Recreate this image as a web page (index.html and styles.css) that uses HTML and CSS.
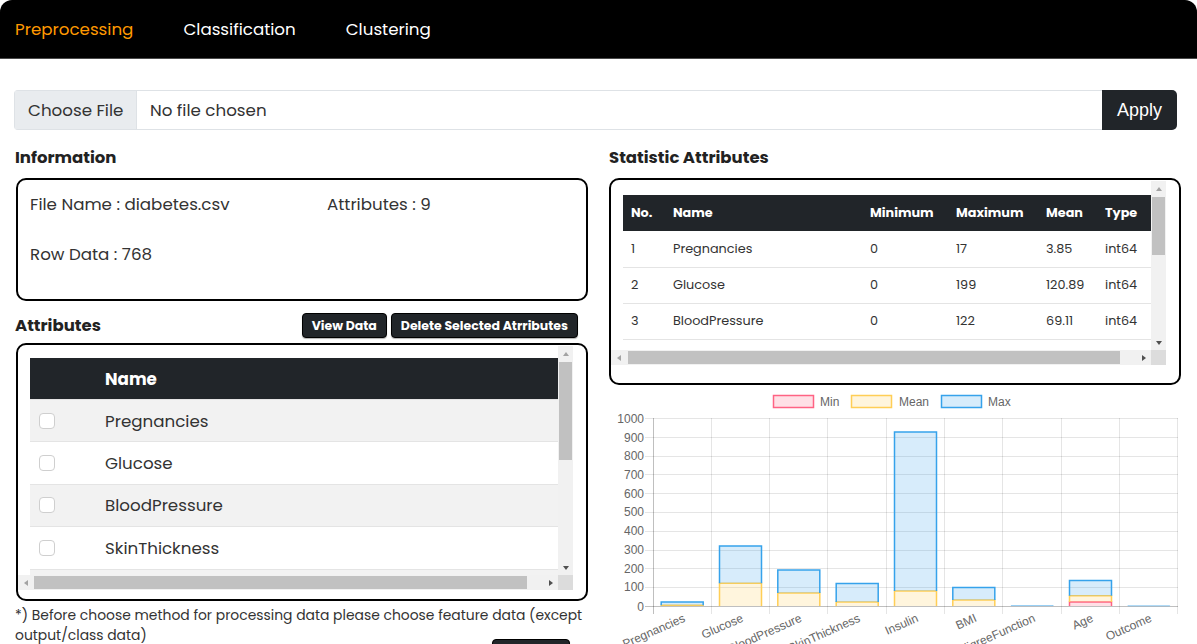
FILE: index.html
```html
<!DOCTYPE html>
<html lang="en">
<head>
<meta charset="utf-8">
<title>Preprocessing</title>
<link rel="stylesheet" href="styles.css">
</head>
<body>
<nav class="topnav">
  <a class="nav-link active">Preprocessing</a>
  <a class="nav-link">Classification</a>
  <a class="nav-link">Clustering</a>
</nav>
<main class="page">
  <div class="upload">
    <div class="choose">Choose File</div>
    <div class="chosen">No file chosen</div>
    <button class="apply">Apply</button>
  </div>
  <div class="cols">
    <section class="col">
      <h2 class="heading">Information</h2>
      <div class="box info-box">
        <div class="info-grid">
          <div>File Name : diabetes.csv</div>
          <div>Attributes : 9</div>
          <div>Row Data : 768</div>
        </div>
      </div>
      <div class="attr-head">
        <h2 class="heading">Attributes</h2>
        <div class="btns">
          <button class="btn-dark">View Data</button>
          <button class="btn-dark">Delete Selected Atrributes</button>
        </div>
      </div>
      <div class="box attr-box">
        <div class="frame attr-frame">
          <div class="viewport attr-view">
            <table class="attr-table">
              <thead><tr><th class="cb-col"></th><th>Name</th></tr></thead>
              <tbody>
                <tr><td class="cb-col"><span class="cb"></span></td><td>Pregnancies</td></tr>
                <tr><td class="cb-col"><span class="cb"></span></td><td>Glucose</td></tr>
                <tr><td class="cb-col"><span class="cb"></span></td><td>BloodPressure</td></tr>
                <tr><td class="cb-col"><span class="cb"></span></td><td>SkinThickness</td></tr>
                <tr><td class="cb-col"><span class="cb"></span></td><td>Insulin</td></tr>
                <tr><td class="cb-col"><span class="cb"></span></td><td>BMI</td></tr>
                <tr><td class="cb-col"><span class="cb"></span></td><td>DiabetesPedigreeFunction</td></tr>
                <tr><td class="cb-col"><span class="cb"></span></td><td>Age</td></tr>
              </tbody>
            </table>
          </div>
          <div class="vbar">
            <span class="sbtn"><i class="arr up"></i></span>
            <span class="vtrack"><span class="vthumb attr-vthumb"></span></span>
            <span class="sbtn"><i class="arr down"></i></span>
          </div>
          <div class="hbar">
            <span class="sbtn"><i class="arr left"></i></span>
            <span class="htrack"><span class="hthumb attr-hthumb"></span></span>
            <span class="sbtn"><i class="arr right"></i></span>
          </div>
          <div class="corner"></div>
        </div>
      </div>
      <p class="note">*) Before choose method for processing data please choose feature data (except output/class data)</p>
      <div class="process-row"><button class="btn-dark process">Process</button></div>
    </section>
    <section class="col">
      <h2 class="heading">Statistic Attributes</h2>
      <div class="box stat-box">
        <div class="frame stat-frame">
          <div class="viewport stat-view">
            <table class="stat-table">
              <thead>
                <tr><th class="c-no">No.</th><th class="c-name">Name</th><th class="c-min">Minimum</th><th class="c-max">Maximum</th><th class="c-mean">Mean</th><th class="c-type">Type</th></tr>
              </thead>
              <tbody>
                <tr><td>1</td><td>Pregnancies</td><td>0</td><td>17</td><td>3.85</td><td>int64</td></tr>
                <tr><td>2</td><td>Glucose</td><td>0</td><td>199</td><td>120.89</td><td>int64</td></tr>
                <tr><td>3</td><td>BloodPressure</td><td>0</td><td>122</td><td>69.11</td><td>int64</td></tr>
                <tr><td>4</td><td>SkinThickness</td><td>0</td><td>99</td><td>20.54</td><td>int64</td></tr>
                <tr><td>5</td><td>Insulin</td><td>0</td><td>846</td><td>79.8</td><td>int64</td></tr>
                <tr><td>6</td><td>BMI</td><td>0.0</td><td>67.1</td><td>31.99</td><td>float64</td></tr>
                <tr><td>7</td><td>DiabetesPedigreeFunction</td><td>0.078</td><td>2.42</td><td>0.47</td><td>float64</td></tr>
                <tr><td>8</td><td>Age</td><td>21</td><td>81</td><td>33.24</td><td>int64</td></tr>
                <tr><td>9</td><td>Outcome</td><td>0</td><td>1</td><td>0.35</td><td>int64</td></tr>
              </tbody>
            </table>
          </div>
          <div class="vbar">
            <span class="sbtn"><i class="arr up"></i></span>
            <span class="vtrack"><span class="vthumb stat-vthumb"></span></span>
            <span class="sbtn"><i class="arr down"></i></span>
          </div>
          <div class="hbar">
            <span class="sbtn"><i class="arr left"></i></span>
            <span class="htrack"><span class="hthumb stat-hthumb"></span></span>
            <span class="sbtn"><i class="arr right"></i></span>
          </div>
          <div class="corner"></div>
        </div>
      </div>
      <svg class="chart" width="572" height="290" viewBox="0 0 572 290" xmlns="http://www.w3.org/2000/svg">
        <g class="legend">
          <rect x="164.5" y="10.5" width="40" height="12" fill="rgba(255,99,132,0.2)" stroke="rgb(255,99,132)" stroke-width="1.5"/>
          <text x="211" y="20.5">Min</text>
          <rect x="242.5" y="10.5" width="40" height="12" fill="rgba(255,206,86,0.2)" stroke="rgb(255,206,86)" stroke-width="1.5"/>
          <text x="290" y="20.5">Mean</text>
          <rect x="332.5" y="10.5" width="40" height="12" fill="rgba(54,162,235,0.2)" stroke="rgb(54,162,235)" stroke-width="1.5"/>
          <text x="379" y="20.5">Max</text>
        </g>
        <g class="grid" stroke="rgba(0,0,0,0.1)" stroke-width="1">
          <line x1="36" y1="33.5" x2="569" y2="33.5"/>
          <line x1="36" y1="52.5" x2="569" y2="52.5"/>
          <line x1="36" y1="71.5" x2="569" y2="71.5"/>
          <line x1="36" y1="89.5" x2="569" y2="89.5"/>
          <line x1="36" y1="108.5" x2="569" y2="108.5"/>
          <line x1="36" y1="127.5" x2="569" y2="127.5"/>
          <line x1="36" y1="146.5" x2="569" y2="146.5"/>
          <line x1="36" y1="165.5" x2="569" y2="165.5"/>
          <line x1="36" y1="183.5" x2="569" y2="183.5"/>
          <line x1="36" y1="202.5" x2="569" y2="202.5"/>
          <line x1="102.5" y1="33" x2="102.5" y2="229"/>
          <line x1="160.5" y1="33" x2="160.5" y2="229"/>
          <line x1="218.5" y1="33" x2="218.5" y2="229"/>
          <line x1="277.5" y1="33" x2="277.5" y2="229"/>
          <line x1="335.5" y1="33" x2="335.5" y2="229"/>
          <line x1="393.5" y1="33" x2="393.5" y2="229"/>
          <line x1="452.5" y1="33" x2="452.5" y2="229"/>
          <line x1="510.5" y1="33" x2="510.5" y2="229"/>
          <line x1="568.5" y1="33" x2="568.5" y2="229"/>
        </g>
        <g stroke="rgba(0,0,0,0.25)" stroke-width="1">
          <line x1="36" y1="221.5" x2="569" y2="221.5"/>
          <line x1="44.5" y1="33" x2="44.5" y2="229"/>
        </g>
        <g class="ylabels" text-anchor="end">
          <text x="35" y="37.5">1000</text>
          <text x="35" y="56.5">900</text>
          <text x="35" y="75">800</text>
          <text x="35" y="93.5">700</text>
          <text x="35" y="112.5">600</text>
          <text x="35" y="131">500</text>
          <text x="35" y="150">400</text>
          <text x="35" y="168.5">300</text>
          <text x="35" y="187.5">200</text>
          <text x="35" y="206">100</text>
          <text x="35" y="225.5">0</text>
        </g>
        <g class="bars" stroke-width="1.5">
          <path d="M52.2 221 V220.3 H94.2 V221" fill="rgba(255,206,86,0.2)" stroke="rgb(255,206,86)"/>
          <path d="M52.2 220.3 V217.1 H94.2 V220.3" fill="rgba(54,162,235,0.2)" stroke="rgb(54,162,235)"/>
          <path d="M110.5 221 V198.3 H152.5 V221" fill="rgba(255,206,86,0.2)" stroke="rgb(255,206,86)"/>
          <path d="M110.5 198.3 V160.9 H152.5 V198.3" fill="rgba(54,162,235,0.2)" stroke="rgb(54,162,235)"/>
          <path d="M168.8 221 V208 H210.8 V221" fill="rgba(255,206,86,0.2)" stroke="rgb(255,206,86)"/>
          <path d="M168.8 208 V185.1 H210.8 V208" fill="rgba(54,162,235,0.2)" stroke="rgb(54,162,235)"/>
          <path d="M227.2 221 V217.1 H269.2 V221" fill="rgba(255,206,86,0.2)" stroke="rgb(255,206,86)"/>
          <path d="M227.2 217.1 V198.5 H269.2 V217.1" fill="rgba(54,162,235,0.2)" stroke="rgb(54,162,235)"/>
          <path d="M285.5 221 V206 H327.5 V221" fill="rgba(255,206,86,0.2)" stroke="rgb(255,206,86)"/>
          <path d="M285.5 206 V47 H327.5 V206" fill="rgba(54,162,235,0.2)" stroke="rgb(54,162,235)"/>
          <path d="M343.8 221 V215 H385.8 V221" fill="rgba(255,206,86,0.2)" stroke="rgb(255,206,86)"/>
          <path d="M343.8 215 V202.4 H385.8 V215" fill="rgba(54,162,235,0.2)" stroke="rgb(54,162,235)"/>
          <path d="M402.2 221 V220.6 H444.2 V221" fill="rgba(54,162,235,0.2)" stroke="rgba(54,162,235,0.5)" stroke-width="1"/>
          <path d="M460.5 221 V217 H502.5 V221" fill="rgba(255,99,132,0.2)" stroke="rgb(255,99,132)"/>
          <path d="M460.5 217 V210.8 H502.5 V217" fill="rgba(255,206,86,0.2)" stroke="rgb(255,206,86)"/>
          <path d="M460.5 210.8 V195.6 H502.5 V210.8" fill="rgba(54,162,235,0.2)" stroke="rgb(54,162,235)"/>
          <path d="M518.8 221 V220.8 H560.8 V221" fill="rgba(54,162,235,0.2)" stroke="rgba(54,162,235,0.5)" stroke-width="1"/>
        </g>
        <g class="xlabels" text-anchor="end">
          <text transform="translate(77,236) rotate(-24)">Pregnancies</text>
          <text transform="translate(135,236) rotate(-24)">Glucose</text>
          <text transform="translate(193.5,236) rotate(-24)">BloodPressure</text>
          <text transform="translate(252,236) rotate(-24)">SkinThickness</text>
          <text transform="translate(310,236) rotate(-24)">Insulin</text>
          <text transform="translate(368.5,236) rotate(-24)">BMI</text>
          <text transform="translate(427,236) rotate(-24)">DiabetesPedigreeFunction</text>
          <text transform="translate(485,236) rotate(-24)">Age</text>
          <text transform="translate(543.5,236) rotate(-24)">Outcome</text>
        </g>
      </svg>
    </section>
  </div>
</main>
</body>
</html>
```
FILE: styles.css
```css
* { box-sizing: border-box; }

body {
  margin: 0;
  font-family: "Poppins", "Open Sans", "Noto Sans", sans-serif;
  color: #212529;
  background: #fff;
}

.topnav {
  height: 59px;
  background: #000;
  border-radius: 12px 12px 0 0;
  border-bottom: 1px solid #4a4a4a;
  display: flex;
  align-items: center;
  gap: 50px;
  padding-left: 15px;
  font-size: 16.7px;
}

.nav-link {
  color: #fff;
  text-decoration: none;
}

.nav-link.active { color: #ff9900; }

.page {
  padding: 31px 20px 0 14px;
}

.upload {
  display: flex;
  height: 40px;
  border: 1px solid #dee2e6;
  border-right: 0;
  border-radius: 4px 5px 5px 4px;
  font-size: 16.7px;
}

.choose {
  width: 122px;
  background: #e9ecef;
  border-right: 1px solid #dee2e6;
  display: flex;
  align-items: center;
  padding-left: 13px;
  color: #333;
}

.chosen {
  flex: 1;
  display: flex;
  align-items: center;
  padding-left: 13px;
  color: #333;
}

.apply {
  width: 75px;
  margin: -1px 0;
  border: 0;
  border-radius: 0 5px 5px 0;
  background: #212529;
  color: #fff;
  font-family: "Liberation Sans", Arial, sans-serif;
  font-size: 18px;
}

.cols {
  display: grid;
  grid-template-columns: 573px 572px;
  column-gap: 21px;
  padding-left: 1px;
  margin-top: 16px;
}

.heading {
  margin: 0;
  font-size: 16.5px;
  line-height: 24px;
  font-weight: 700;
  color: #222;
}

.col > .heading { margin-bottom: 8px; }

.box {
  border: 2px solid #000;
  border-radius: 10px;
  background: #fff;
}

.info-box {
  margin-left: 1px;
  height: 123px;
  padding: 11px 12px;
  font-size: 16.7px;
  color: #333;
}

.info-grid {
  display: grid;
  grid-template-columns: 297px 1fr;
  row-gap: 24px;
  line-height: 26px;
}

.attr-head {
  display: flex;
  align-items: center;
  justify-content: space-between;
  margin-top: 12px;
  margin-bottom: 5px;
  padding-right: 10px;
}

.btns { display: flex; gap: 4px; }

.btn-dark {
  height: 25px;
  padding: 0 9px;
  background: #212529;
  color: #fff;
  border: 1px solid #000;
  border-radius: 4px;
  font-family: inherit;
  font-size: 12.5px;
  font-weight: 700;
  box-shadow: 0 1px 1px rgba(0,0,0,0.3);
}

/* drawn classic scrollbars */
.frame {
  display: grid;
  grid-template-columns: 1fr 15px;
  grid-template-rows: 1fr 15px;
}

.viewport { overflow: hidden; }

.vbar, .hbar {
  display: flex;
  background: #f1f1f1;
}

.vbar { flex-direction: column; }

.sbtn {
  flex: 0 0 15px;
  width: 15px;
  height: 15px;
  display: flex;
  align-items: center;
  justify-content: center;
}

.vtrack, .htrack { flex: 1; display: flex; }
.vtrack { flex-direction: column; }

.vthumb {
  display: block;
  margin: 1px 1px 0 1px;
  background: #c1c1c1;
}

.hthumb {
  display: block;
  margin: 1px 0 1px 0;
  background: #c1c1c1;
}

.corner { background: #dcdcdc; }

.arr {
  display: block;
  width: 0;
  height: 0;
  border-style: solid;
}

.arr.up { border-width: 0 3.5px 4px 3.5px; border-color: transparent transparent #a3a3a3 transparent; }
.arr.down { border-width: 4px 3.5px 0 3.5px; border-color: #505050 transparent transparent transparent; }
.arr.left { border-width: 3.5px 4px 3.5px 0; border-color: transparent #a3a3a3 transparent transparent; }
.arr.right { border-width: 3.5px 0 3.5px 4px; border-color: transparent transparent transparent #505050; }

.attr-box {
  margin-left: 1px;
  height: 258px;
  padding: 1px 13px 9px 0;
}

.attr-frame { height: 244px; }
.attr-view { padding: 12px 0 0 12px; }
.attr-vthumb { height: 98px; }
.attr-hthumb { width: 493px; margin-left: 1px; }

.attr-table {
  width: 546px;
  border-collapse: collapse;
  font-size: 16.7px;
}

.attr-table th {
  height: 41.5px;
  background: #212529;
  color: #fff;
  text-align: left;
  font-weight: 700;
  padding: 0;
}

.attr-table td {
  height: 42.4px;
  padding: 0;
  border-top: 1px solid #e4e4e4;
  color: #333;
}

.attr-table tbody tr:nth-child(odd) td { background: #f2f2f2; }

.attr-table .cb-col { width: 75px; padding-left: 9px; }

.cb {
  display: block;
  width: 16px;
  height: 16px;
  background: #fff;
  border: 1px solid #cfcfcf;
  border-radius: 4px;
}

.note {
  margin: 4px 0 0 0;
  font-size: 13.9px;
  line-height: 20px;
  color: #333;
}

.process-row {
  display: flex;
  justify-content: flex-end;
  margin-top: -6px;
  padding-right: 18px;
}

.process { width: 78px; height: 30px; }

.stat-box {
  height: 207px;
  padding: 1px 13px 0 0;
}

.stat-frame { height: 184px; }
.stat-view { padding: 14px 0 0 12px; }
.stat-vthumb { height: 58px; }
.stat-hthumb { width: 492px; margin-left: 2px; }

.stat-table {
  width: 552px;
  border-collapse: collapse;
  font-size: 12.8px;
  white-space: nowrap;
}

.stat-table th {
  height: 36px;
  background: #212529;
  color: #fff;
  font-weight: 700;
  text-align: left;
  padding: 0 0 0 8px;
}

.stat-table td {
  height: 36px;
  padding: 0 0 0 8px;
  border-bottom: 1px solid #e4e4e4;
  color: #333;
}

.c-no { width: 42px; }
.c-name { width: 197px; }
.c-min { width: 86px; }
.c-max { width: 90px; }
.c-mean { width: 59px; }

.chart {
  display: block;
  overflow: visible;
  font-family: "Liberation Sans", Arial, sans-serif;
  font-size: 12px;
}

.chart text { fill: #666; }
```
